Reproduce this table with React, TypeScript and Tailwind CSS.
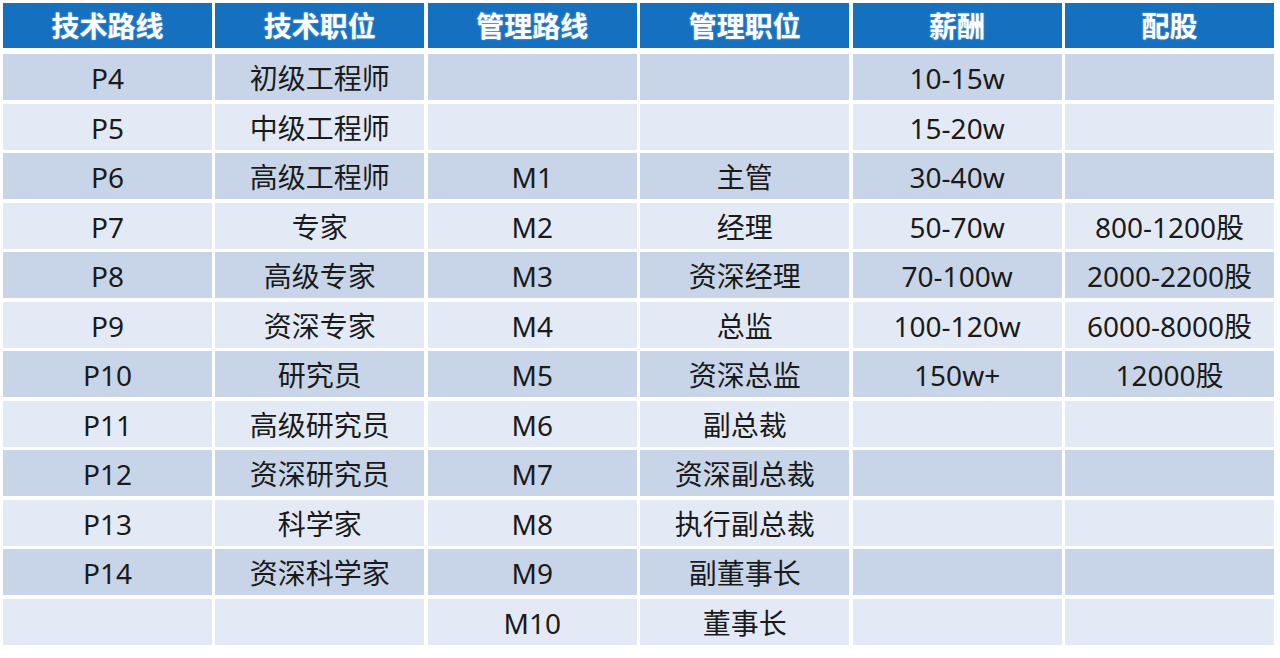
import React from "react";

const headers = ["技术路线", "技术职位", "管理路线", "管理职位", "薪酬", "配股"];

const rows: string[][] = [
  ["P4", "初级工程师", "", "", "10-15w", ""],
  ["P5", "中级工程师", "", "", "15-20w", ""],
  ["P6", "高级工程师", "M1", "主管", "30-40w", ""],
  ["P7", "专家", "M2", "经理", "50-70w", "800-1200股"],
  ["P8", "高级专家", "M3", "资深经理", "70-100w", "2000-2200股"],
  ["P9", "资深专家", "M4", "总监", "100-120w", "6000-8000股"],
  ["P10", "研究员", "M5", "资深总监", "150w+", "12000股"],
  ["P11", "高级研究员", "M6", "副总裁", "", ""],
  ["P12", "资深研究员", "M7", "资深副总裁", "", ""],
  ["P13", "科学家", "M8", "执行副总裁", "", ""],
  ["P14", "资深科学家", "M9", "副董事长", "", ""],
  ["", "", "M10", "董事长", "", ""],
];

export default function App() {
  return (
    <div
      className="w-[1280px] h-[658px] bg-white pl-[3px] pr-[6px] pt-[3px] overflow-hidden"
      style={{ fontFamily: '"Noto Sans", "Noto Sans CJK SC", sans-serif' }}
    >
      <div className="grid grid-cols-6 gap-x-[3.5px]">
        {headers.map((h) => (
          <div
            key={h}
            className="h-[45px] bg-[#1570c0] text-white font-bold text-[28px] flex items-center justify-center [text-shadow:0_0_2px_rgba(255,255,255,0.5)]"
          >
            {h}
          </div>
        ))}
      </div>
      <div className="grid grid-cols-6 gap-x-[3.5px] gap-y-[3.5px] mt-[6px]">
        {rows.map((r, i) =>
          r.map((c, j) => (
            <div
              key={`${i}-${j}`}
              className={`h-[46px] flex items-center justify-center pt-[2px] text-[28px] text-[#1a1a1a] leading-none ${
                i % 2 === 0 ? "bg-[#c8d5e8]" : "bg-[#e4eaf5]"
              }`}
            >
              {c}
            </div>
          ))
        )}
      </div>
    </div>
  );
}
